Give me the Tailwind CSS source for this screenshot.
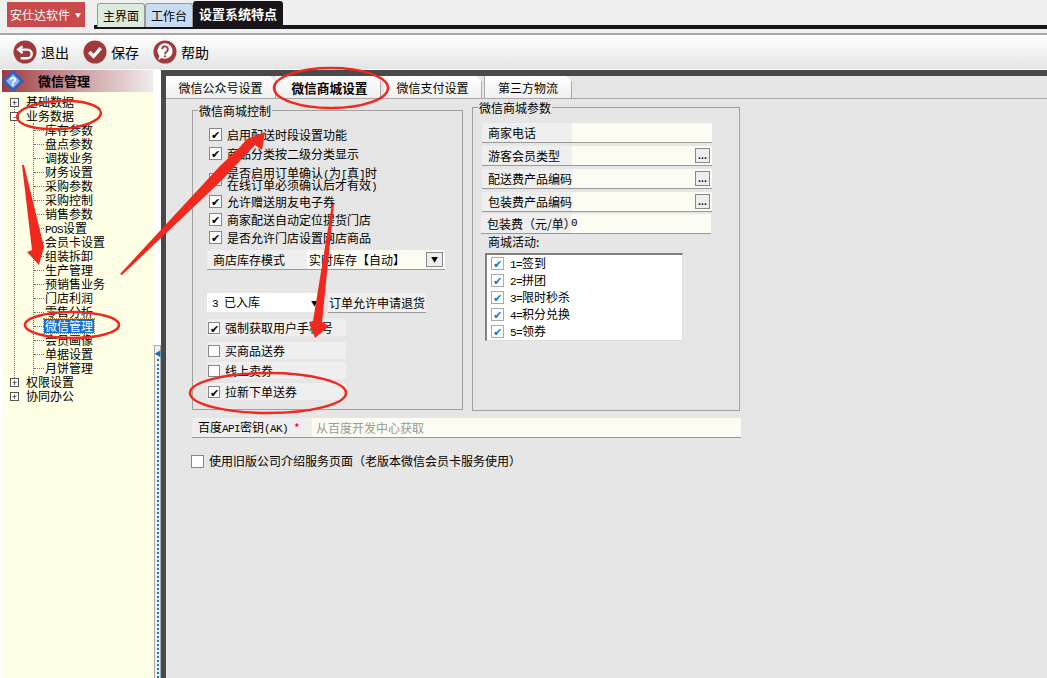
<!DOCTYPE html>
<html lang="zh-CN">
<head>
    <meta charset="UTF-8">
    <script src="https://cdn.jsdelivr.net/npm/@tailwindcss/browser@4"></script>
    <title>设置系统特点</title>
</head>
<body class="w-[1047px] h-[678px] overflow-hidden relative bg-white text-black text-[12px] leading-[14px] font-['Noto_Sans_CJK_SC','Liberation_Sans',sans-serif]">
    <!-- top tabs -->
    <div class="h-[35px] flex items-start border-b-2 border-[#a8a8a8] bg-[#f0f0f0] pl-[7px] relative">
        <div class="w-[78px] h-[25px] mt-[2px] bg-[#c84a4a] text-white flex items-center pl-[3px] whitespace-nowrap">安仕达软件<span class="ml-[5px] text-[6px]">▼</span></div>
        <div class="flex items-start ml-[12px] mt-[1px] relative z-10">
            <div class="w-[48px] h-[24px] mt-[2px] bg-[#dcebdc] border border-b-0 border-[#999] rounded-t-[3px] flex items-center justify-center">主界面</div>
            <div class="w-[48px] h-[24px] mt-[2px] bg-[#c8dcf2] border border-b-0 border-[#999] rounded-t-[3px] flex items-center justify-center">工作台</div>
            <div class="w-[90px] h-[26px] bg-[#17151a] text-white font-bold text-[13px] rounded-t-[3px] flex items-center justify-center">设置系统特点</div>
        </div>
        <div class="absolute left-[94px] right-0 top-[25px] h-[4px] bg-[#17151a]"></div>
    </div>
    <!-- toolbar -->
    <div class="h-[34px] bg-gradient-to-b from-white to-[#e4e4e4] flex items-center pl-[13px] text-[14px]">
        <div class="flex items-center gap-[4px] mr-[14px]">
            <svg width="24" height="24" viewBox="0 0 25 25"><circle cx="12.500" cy="12.500" r="12" fill="#a03a3a"/><path d="M10 6.500 L5.500 10 L10 13.500 M6 10 H15 a4.500 4.500 0 0 1 0 9 H8" fill="none" stroke="#fff" stroke-width="2.500"/></svg>
            <span>退出</span>
        </div>
        <div class="flex items-center gap-[4px] mr-[14px]">
            <svg width="24" height="24" viewBox="0 0 25 25"><circle cx="12.500" cy="12.500" r="12" fill="#a03a3a"/><path d="M6.500 12.500 L11 17 L18.500 8.500" fill="none" stroke="#fff" stroke-width="3.500"/></svg>
            <span>保存</span>
        </div>
        <div class="flex items-center gap-[4px]">
            <svg width="24" height="24" viewBox="0 0 25 25"><circle cx="12.500" cy="12.500" r="12" fill="#a03a3a"/><path d="M12.500 3.500 a8 8 0 1 1 -3.500 15.200 l-3.500 2.300 1 -4.500 a8 8 0 0 1 6 -13z" fill="#fff"/><path d="M9.500 9.500 a3 3 0 1 1 4.500 2.700 c-1.200 .7 -1.500 1.300 -1.500 2.600" fill="none" stroke="#a03a3a" stroke-width="2"/><circle cx="12.500" cy="17" r="1.200" fill="#a03a3a"/></svg>
            <span>帮助</span>
        </div>
    </div>
    <!-- main -->
    <div class="flex h-[609px] bg-white pt-[1px]">
        <!-- tree -->
        <div class="w-[150px] ml-[3px] flex flex-col relative">
            <div class="h-[22px] -ml-[1px] bg-gradient-to-r from-[#9a3a42] via-[#c99ca0] to-[#f0ecec] flex items-center font-bold shrink-0">
                <svg width="22" height="22" viewBox="0 0 22 22"><path d="M11 0 L22 11 L11 22 L0 11z" fill="#2f62b8"/><path d="M11 4 L18 11 L11 18 L4 11z" fill="#8db4ee"/><text x="11" y="15.500" text-anchor="middle" font-size="12" font-weight="700" fill="#fff" font-family="Liberation Sans">?</text></svg>
                <span class="ml-[14px] text-[13px]">微信管理</span>
            </div>
            <div class="flex-1 bg-[#ffffe6] pt-[3px] pl-[7px] relative">
                <div class="absolute left-[11px] top-[8px] h-[280px] border-l border-dotted border-[#777]"></div>
                <div class="flex items-center h-[14px] relative"><span class="w-[9px] h-[9px] border border-[#555] bg-white mr-[7px] flex items-center justify-center text-[9px] leading-[9px]">+</span>基础数据</div>
                <div class="flex items-center h-[14px] relative"><span class="w-[9px] h-[9px] border border-[#555] bg-white mr-[7px] flex items-center justify-center text-[9px] leading-[9px]">-</span>业务数据</div>
                <div class="ml-[23px] border-l border-dotted border-[#777] flex flex-col">
                    <div class="flex items-center h-[14px]"><span class="w-[10px] mr-[1px] border-t border-dotted border-[#777]"></span>库存参数</div>
                    <div class="flex items-center h-[14px]"><span class="w-[10px] mr-[1px] border-t border-dotted border-[#777]"></span>盘点参数</div>
                    <div class="flex items-center h-[14px]"><span class="w-[10px] mr-[1px] border-t border-dotted border-[#777]"></span>调拨业务</div>
                    <div class="flex items-center h-[14px]"><span class="w-[10px] mr-[1px] border-t border-dotted border-[#777]"></span>财务设置</div>
                    <div class="flex items-center h-[14px]"><span class="w-[10px] mr-[1px] border-t border-dotted border-[#777]"></span>采购参数</div>
                    <div class="flex items-center h-[14px]"><span class="w-[10px] mr-[1px] border-t border-dotted border-[#777]"></span>采购控制</div>
                    <div class="flex items-center h-[14px]"><span class="w-[10px] mr-[1px] border-t border-dotted border-[#777]"></span>销售参数</div>
                    <div class="flex items-center h-[14px]"><span class="w-[10px] mr-[1px] border-t border-dotted border-[#777]"></span><span><span class="font-['Liberation_Mono'] text-[11px] tracking-[-0.6px] leading-none">POS</span>设置</span></div>
                    <div class="flex items-center h-[14px]"><span class="w-[10px] mr-[1px] border-t border-dotted border-[#777]"></span>会员卡设置</div>
                    <div class="flex items-center h-[14px]"><span class="w-[10px] mr-[1px] border-t border-dotted border-[#777]"></span>组装拆卸</div>
                    <div class="flex items-center h-[14px]"><span class="w-[10px] mr-[1px] border-t border-dotted border-[#777]"></span>生产管理</div>
                    <div class="flex items-center h-[14px]"><span class="w-[10px] mr-[1px] border-t border-dotted border-[#777]"></span>预销售业务</div>
                    <div class="flex items-center h-[14px]"><span class="w-[10px] mr-[1px] border-t border-dotted border-[#777]"></span>门店利润</div>
                    <div class="flex items-center h-[14px]"><span class="w-[10px] mr-[1px] border-t border-dotted border-[#777]"></span>零售分析</div>
                    <div class="flex items-center h-[14px]"><span class="w-[10px] border-t border-dotted border-[#777]"></span><span class="bg-[#0f6fd0] text-white outline-1 outline-dotted outline-[#c08030] px-[1px]">微信管理</span></div>
                    <div class="flex items-center h-[14px]"><span class="w-[10px] mr-[1px] border-t border-dotted border-[#777]"></span>会员画像</div>
                    <div class="flex items-center h-[14px]"><span class="w-[10px] mr-[1px] border-t border-dotted border-[#777]"></span>单据设置</div>
                    <div class="flex items-center h-[14px]"><span class="w-[10px] mr-[1px] border-t border-dotted border-[#777]"></span>月饼管理</div>
                </div>
                <div class="flex items-center h-[14px] relative"><span class="w-[9px] h-[9px] border border-[#555] bg-white mr-[7px] flex items-center justify-center text-[9px] leading-[9px]">+</span>权限设置</div>
                <div class="flex items-center h-[14px] relative"><span class="w-[9px] h-[9px] border border-[#555] bg-white mr-[7px] flex items-center justify-center text-[9px] leading-[9px]">+</span>协同办公</div>
            </div>
        </div>
        <!-- splitter -->
        <div class="w-[8px] pt-[275px] flex flex-col">
            <div class="w-[7px] ml-[1px] flex-1 border-x border-t border-[#aaa] bg-[#eef2f6] flex flex-col items-center">
                <div class="text-[#0f6fd0] text-[7px] leading-[12px] mt-[1px]">◀</div>
                <div class="flex-1 border-l-2 border-dotted border-[#1f78d0]"></div>
            </div>
        </div>
        <!-- content -->
        <div class="flex-1 border-l-[5px] border-t-[6px] border-[#48484d] bg-[#e6e6e6] relative">
            <div class="h-[23px] flex items-end border-b border-[#a8a8a8]">
                <div class="w-[110px] h-[22px] pt-[2px] bg-gradient-to-b from-white to-[#f0f0f0] border-r border-[#aaa] [clip-path:polygon(0_0,calc(100%-6px)_0,100%_6px,100%_100%,0_100%)] flex items-center justify-center">微信公众号设置</div>
                <div class="w-[105px] h-[22px] pt-[2px] pl-[3px] bg-gradient-to-b from-white to-[#eeeeee] font-bold text-[12.7px] border-r border-[#aaa] [clip-path:polygon(0_0,calc(100%-6px)_0,100%_6px,100%_100%,0_100%)] flex items-center justify-center">微信商城设置</div>
                <div class="w-[98px] ml-[3px] h-[22px] pt-[2px] bg-gradient-to-b from-white to-[#f0f0f0] border-r border-[#aaa] [clip-path:polygon(0_0,calc(100%-6px)_0,100%_6px,100%_100%,0_100%)] flex items-center justify-center">微信支付设置</div>
                <div class="w-[88px] ml-[2px] h-[22px] pt-[2px] bg-gradient-to-b from-white to-[#f0f0f0] border-x border-[#aaa] [clip-path:polygon(0_0,calc(100%-6px)_0,100%_6px,100%_100%,0_100%)] flex items-center justify-center">第三方物流</div>
            </div>
            <div class="flex items-end pl-[26px] mt-[8px] gap-[9px] h-[304px]">
                <!-- left group -->
                <div class="w-[271px] h-[300px] mb-[1px] border border-[#a0a0a0] pl-[16px] pt-[15px] relative">
                    <span class="absolute left-[5px] top-[-7px] bg-[#e6e6e6] px-[1px]">微信商城控制</span>
                    <div class="flex items-center h-[17px]"><span class="w-[13px] h-[13px] border border-[#888] bg-white mr-[5px] text-[11px] leading-[11px] text-center">✔</span>启用配送时段设置功能</div>
                    <div class="flex items-center h-[17px] mt-[2px]"><span class="w-[13px] h-[13px] border border-[#888] bg-white mr-[5px] text-[11px] leading-[11px] text-center">✔</span>商品分类按二级分类显示</div>
                    <div class="flex items-center h-[26px] mt-[4px]"><span class="w-[13px] h-[13px] border border-[#888] bg-white mr-[5px]"></span><div class="leading-[12px] whitespace-nowrap"><div class="h-[12px]">是否启用订单确认<span class="font-['Liberation_Mono'] text-[11px] tracking-[-0.6px] leading-none">(</span>为<span class="font-['Liberation_Mono'] text-[11px] tracking-[-0.6px] leading-none">[</span>真<span class="font-['Liberation_Mono'] text-[11px] tracking-[-0.6px] leading-none">]</span>时</div><div class="h-[12px]">在线订单必须确认后才有效<span class="font-['Liberation_Mono'] text-[11px] tracking-[-0.6px] leading-none">)</span></div></div></div>
                    <div class="flex items-center h-[17px] mt-[1px]"><span class="w-[13px] h-[13px] border border-[#888] bg-white mr-[5px] text-[11px] leading-[11px] text-center">✔</span>允许赠送朋友电子券</div>
                    <div class="flex items-center h-[17px] mt-[1px]"><span class="w-[13px] h-[13px] border border-[#888] bg-white mr-[5px] text-[11px] leading-[11px] text-center">✔</span>商家配送自动定位提货门店</div>
                    <div class="flex items-center h-[17px] mt-[1px]"><span class="w-[13px] h-[13px] border border-[#888] bg-white mr-[5px] text-[11px] leading-[11px] text-center">✔</span>是否允许门店设置网店商品</div>
                    <div class="flex items-center w-[238px] h-[20px] mt-[4px] -ml-[2px] border-b border-[#999] bg-[#efefef]">
                        <span class="w-[100px] pl-[6px]">商店库存模式</span>
                        <span class="flex-1 h-full bg-[#fcfcf2] flex items-center justify-between pr-[2px] pl-[2px]">实时库存【自动】<span class="w-[17px] h-[15px] bg-[#eee] border border-[#888] text-[7px] leading-[13px] text-center">▼</span></span>
                    </div>
                    <div class="flex items-start mt-[23px] -ml-[2px]">
                        <span class="w-[117px] h-[19px] bg-white flex items-center justify-between pl-[5px] pr-[6px]"><span><span class="font-['Liberation_Mono'] text-[11px] tracking-[-0.6px] leading-none">3 </span>已入库</span><span class="text-[7px]">▼</span></span>
                        <span class="ml-[4px] h-[20px] px-[1px] flex items-center border-b border-[#999] bg-[#efefef]">订单允许申请退货</span>
                    </div>
                    <div class="flex items-center w-[139px] h-[17px] mt-[6px] -ml-[2px] bg-[#efefef]"><span class="w-[12px] h-[12px] border border-[#888] bg-white ml-[1px] mr-[5px] text-[11px] leading-[10px] text-center">✔</span>强制获取用户手机号</div>
                    <div class="flex items-center w-[139px] h-[17px] mt-[6px] -ml-[2px] bg-[#efefef]"><span class="w-[12px] h-[12px] border border-[#888] bg-white ml-[1px] mr-[5px]"></span>买商品送券</div>
                    <div class="flex items-center w-[139px] h-[17px] mt-[3px] -ml-[2px] bg-[#efefef]"><span class="w-[12px] h-[12px] border border-[#888] bg-white ml-[1px] mr-[5px]"></span>线上卖券</div>
                    <div class="flex items-center w-[139px] h-[17px] mt-[4px] -ml-[2px] bg-[#efefef]"><span class="w-[12px] h-[12px] border border-[#888] bg-white ml-[1px] mr-[5px] text-[11px] leading-[10px] text-center">✔</span>拉新下单送券</div>
                </div>
                <!-- right group -->
                <div class="w-[268px] h-[304px] border border-[#a0a0a0] pl-[9px] pt-[15px] relative">
                    <span class="absolute left-[5px] top-[-7px] bg-[#e6e6e6] px-[1px]">微信商城参数</span>
                    <div class="flex w-[230px] h-[20px] border-b border-[#999]"><span class="w-[90px] bg-[#efefef] pl-[6px] flex items-center">商家电话</span><span class="flex-1 bg-[#fcfcf2]"></span></div>
                    <div class="flex w-[230px] h-[20px] mt-[3px] border-b border-[#999]"><span class="w-[90px] bg-[#efefef] pl-[6px] flex items-center">游客会员类型</span><span class="flex-1 bg-[#fcfcf2] flex justify-end items-center pr-[2px]"><span class="w-[15px] h-[15px] bg-[#eee] border border-[#888] text-[9px] leading-[13px] text-center font-bold">...</span></span></div>
                    <div class="flex w-[230px] h-[20px] mt-[3px] border-b border-[#999]"><span class="w-[90px] bg-[#efefef] pl-[6px] flex items-center whitespace-nowrap">配送费产品编码</span><span class="flex-1 bg-[#fcfcf2] flex justify-end items-center pr-[2px]"><span class="w-[15px] h-[15px] bg-[#eee] border border-[#888] text-[9px] leading-[13px] text-center font-bold">...</span></span></div>
                    <div class="flex w-[230px] h-[20px] mt-[3px] border-b border-[#999]"><span class="w-[90px] bg-[#efefef] pl-[6px] flex items-center whitespace-nowrap">包装费产品编码</span><span class="flex-1 bg-[#fcfcf2] flex justify-end items-center pr-[2px]"><span class="w-[15px] h-[15px] bg-[#eee] border border-[#888] text-[9px] leading-[13px] text-center font-bold">...</span></span></div>
                    <div class="flex w-[230px] h-[20px] mt-[2px] -ml-[1px] border-b border-[#999]"><span class="w-[90px] bg-[#efefef] pl-[6px] flex items-center whitespace-nowrap">包装费（元/单）</span><span class="flex-1 bg-[#fcfcf2] flex items-center"><span class="font-['Liberation_Mono'] text-[11px] tracking-[-0.6px] leading-none">0</span></span></div>
                    <div class="pl-[6px] mt-[1px] h-[14px]">商城活动:</div>
                    <div class="w-[198px] h-[88px] mt-[4px] ml-[3px] bg-white border-t-2 border-l-2 border-t-[#808080] border-l-[#808080] border-r border-b border-r-[#ddd] border-b-[#ddd] pl-[4px]">
                        <div class="flex items-center h-[17px]"><span class="w-[13px] h-[13px] border border-[#aaa] text-[#0f78d8] mr-[6px] text-[11px] leading-[11px] text-center">✔</span><span><span class="font-['Liberation_Mono'] text-[11px] tracking-[-0.6px] leading-none">1=</span>签到</span></div>
                        <div class="flex items-center h-[17px]"><span class="w-[13px] h-[13px] border border-[#aaa] text-[#0f78d8] mr-[6px] text-[11px] leading-[11px] text-center">✔</span><span><span class="font-['Liberation_Mono'] text-[11px] tracking-[-0.6px] leading-none">2=</span>拼团</span></div>
                        <div class="flex items-center h-[17px]"><span class="w-[13px] h-[13px] border border-[#aaa] text-[#0f78d8] mr-[6px] text-[11px] leading-[11px] text-center">✔</span><span><span class="font-['Liberation_Mono'] text-[11px] tracking-[-0.6px] leading-none">3=</span>限时秒杀</span></div>
                        <div class="flex items-center h-[17px]"><span class="w-[13px] h-[13px] border border-[#aaa] text-[#0f78d8] mr-[6px] text-[11px] leading-[11px] text-center">✔</span><span><span class="font-['Liberation_Mono'] text-[11px] tracking-[-0.6px] leading-none">4=</span>积分兑换</span></div>
                        <div class="flex items-center h-[17px]"><span class="w-[13px] h-[13px] border border-[#aaa] text-[#0f78d8] mr-[6px] text-[11px] leading-[11px] text-center">✔</span><span><span class="font-['Liberation_Mono'] text-[11px] tracking-[-0.6px] leading-none">5=</span>领券</span></div>
                    </div>
                </div>
            </div>
            <div class="flex w-[549px] h-[20px] ml-[26px] mt-[7px] border-b border-[#999]"><span class="w-[120px] bg-[#efefef] pl-[6px] flex items-center whitespace-nowrap"><span>百度<span class="font-['Liberation_Mono'] text-[11px] tracking-[-0.6px] leading-none">API</span>密钥<span class="font-['Liberation_Mono'] text-[11px] tracking-[-0.6px] leading-none">(AK)</span></span><span class="text-red-600 ml-[6px]">*</span></span><span class="flex-1 bg-[#fcfcf2] text-[#999] flex items-center pl-[4px]">从百度开发中心获取</span></div>
            <div class="flex items-center h-[14px] ml-[25px] mt-[16px]"><span class="w-[13px] h-[13px] border border-[#888] bg-white mr-[5px]"></span>使用旧版公司介绍服务页面（老版本微信会员卡服务使用）</div>
        </div>
    </div>
    <!-- red annotations drawn over the screenshot -->
    <svg class="absolute left-0 top-0 pointer-events-none" width="1047" height="678" viewBox="0 0 1047 678">
        <g fill="none" stroke="#f0281e" stroke-width="2.500">
            <ellipse cx="59" cy="115" rx="42" ry="14" transform="rotate(-3 59 115)"/>
            <ellipse cx="72" cy="325" rx="47" ry="13"/>
            <ellipse cx="331" cy="88" rx="57" ry="20"/>
            <ellipse cx="268" cy="393" rx="78" ry="20"/>
        </g>
        <path d="M22 165 L24 165 L44 247 L39 265 L27 252 L32 250z" fill="#f0281e"/>
        <path d="M120 274 L220 166 L240 147 L247 139 L265 132 L262 150 L255 145 L222 180 L122 275z" fill="#f0281e"/>
        <path d="M332 204 L334 204 L322 322 L329 326 L315 338 L309 322 L313 321z" fill="#f0281e"/>
    </svg>
</body>
</html>
